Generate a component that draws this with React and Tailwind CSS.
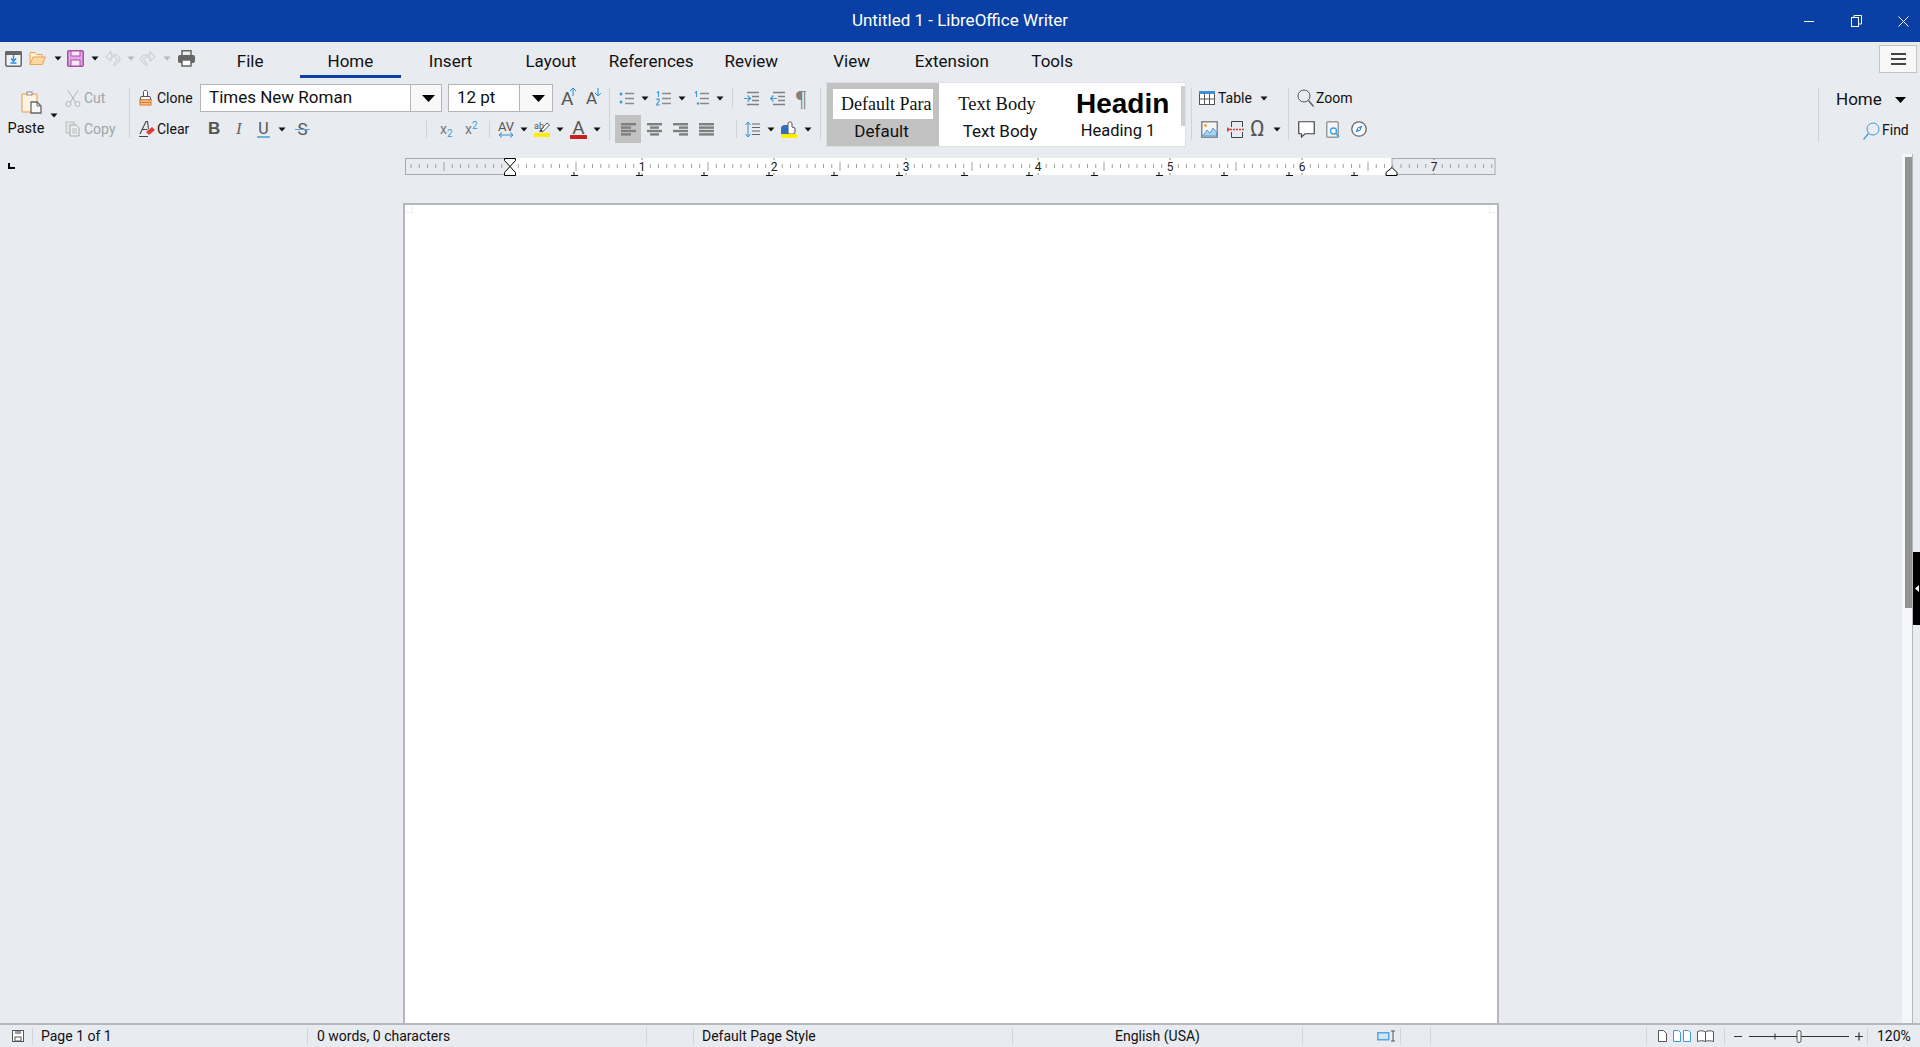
import React from 'react';

const Caret = ({ className = '' }) => (
  <svg width="8" height="5" viewBox="0 0 8 5" className={`shrink-0 ${className}`}>
    <path d="M.5 .5h7L4 4.500z" fill="#111" />
  </svg>
);

const GreyCaret = ({ className = '' }) => (
  <svg width="8" height="5" viewBox="0 0 8 5" className={`shrink-0 ${className}`}>
    <path d="M.5 .5h7L4 4.500z" fill="#b9b9b9" />
  </svg>
);

const Sep = ({ className = '' }) => <div className={`w-px bg-[#cfd2d6] shrink-0 ${className}`} />;

const Row = ({ children }) => <div className="h-[28px] flex items-center">{children}</div>;

// quick access icons
const NewDoc = () => (
  <svg width="17" height="16" viewBox="0 0 17 16" className="ml-[5px]">
    <rect x=".75" y=".75" width="15.500" height="14.500" rx="1.500" fill="#eef3f8" stroke="#666" strokeWidth="1.500" />
    <rect x="0" y="0" width="17" height="4" rx="1.500" fill="#666" />
    <path d="M8.500 4v6M6 7.500l2.500 3 2.500-3M5.500 12h6" fill="none" stroke="#2f8fd8" strokeWidth="1.400" />
  </svg>
);

const OpenIcon = () => (
  <svg width="17" height="15" viewBox="0 0 17 15" className="ml-[7px]">
    <path d="M1 13V1.500h5l2 2h5V6" fill="#fdf0d8" stroke="#e9a452" />
    <path d="M1 13.500l3-7.500h12.500l-3 7.500z" fill="#fbd9a0" stroke="#e9a452" />
  </svg>
);

const SaveIcon = () => (
  <svg width="17" height="17" viewBox="0 0 17 17" className="ml-[5px]">
    <rect x=".75" y=".75" width="15.500" height="15.500" rx="1" fill="#e2a9e2" stroke="#a94fa9" strokeWidth="1.500" />
    <rect x="4" y="1" width="9" height="5" fill="#f7e9f7" stroke="#a94fa9" />
    <rect x="4" y="10" width="9" height="6" fill="#f7e9f7" stroke="#a94fa9" />
  </svg>
);

const UndoIcon = ({ flip, className = '' }) => (
  <svg width="16" height="17" viewBox="0 0 16 17" className={`${flip ? '-scale-x-100' : ''} ${className}`}>
    <path d="M1 7l5-5.500V5h4c4 0 6 3 4.500 6L9.500 16l-1-1 3.500-5c1-1.500-.5-3-2.500-3H6v4z" fill="none" stroke="#c6c8cb" />
  </svg>
);

const PrintIcon = () => (
  <svg width="17" height="17" viewBox="0 0 17 17" className="ml-[7px]">
    <rect x="4" y=".75" width="9" height="5" fill="#eee" stroke="#666" strokeWidth="1.500" />
    <rect x="0" y="5" width="17" height="8" rx="2" fill="#666" />
    <rect x="4" y="10" width="9" height="6" fill="#fff" stroke="#666" strokeWidth="1.500" />
  </svg>
);

const PasteIcon = () => (
  <svg width="21" height="23" viewBox="0 0 21 23">
    <rect x="1" y="3" width="15" height="18" rx="1" fill="#fff3e2" stroke="#f0b27a" strokeWidth="1.500" />
    <rect x="6" y="1" width="5" height="3" fill="#fff" stroke="#8a8a8a" />
    <path d="M10 11h6l4 4v7H10z" fill="#fafafa" stroke="#666" strokeWidth="1.300" />
    <path d="M16 11v4h4" fill="none" stroke="#666" />
  </svg>
);

const CutIcon = () => (
  <svg width="16" height="17" viewBox="0 0 16 17" className="shrink-0">
    <path d="M3 .5l7.500 11.500M13 .5L5.500 12" stroke="#b4b4b4" fill="none" />
    <circle cx="3.500" cy="14" r="2.500" fill="none" stroke="#b4b4b4" />
    <circle cx="12.500" cy="14" r="2.500" fill="none" stroke="#b4b4b4" />
  </svg>
);

const CopyIcon = () => (
  <svg width="16" height="16" viewBox="0 0 16 16" className="shrink-0">
    <rect x="1" y="1" width="8" height="11" fill="#e2e4e7" stroke="#bdbdbd" />
    <path d="M5 4h6l3 3v8H5z" fill="#eceef1" stroke="#a9a9a9" />
    <path d="M7 8h5M7 10h5M7 12h5" stroke="#bdbdbd" />
  </svg>
);

const CloneIcon = () => (
  <svg width="13" height="16" viewBox="0 0 13 16" className="shrink-0">
    <path d="M4.500 6V1.500l1-1h2l1 1V6" fill="#fff" stroke="#555" />
    <path d="M2 6.500h9l1 3.500H1z" fill="#fff" stroke="#555" />
    <rect x="1" y="10" width="11" height="5" fill="#fbc48c" stroke="#e4761f" />
    <path d="M1 12.500h11" stroke="#e4761f" />
  </svg>
);

const ClearIcon = () => (
  <svg width="16" height="16" viewBox="0 0 16 16" className="shrink-0">
    <path d="M1 13L7 .5h1.500L9.500 8M3.500 8.500h5" fill="none" stroke="#444" strokeWidth="1.100" />
    <path d="M7 11l6-5 3 3-6 5z" fill="#e33a3a" />
    <path d="M0 15.500h9" stroke="#444" />
  </svg>
);

const ListIcon = ({ kind, className = '' }) => (
  <svg width="15" height="15" viewBox="0 0 15 15" className={className}>
    <path d="M6 2.500h9M6 7.500h9M6 12.500h9" stroke="#8a8a8a" strokeWidth="1.300" />
    {kind === 'bullet' && (
      <>
        <circle cx="2" cy="3" r="1.500" fill="#3d9bdc" />
        <circle cx="2" cy="11" r="1.500" fill="#3d9bdc" />
      </>
    )}
    {kind === 'num' && <path d="M1 2l1.500-1.500V6M.500 9c.5-1.500 3-1.500 3 0 0 1-2 2.500-3 5h3.500" fill="none" stroke="#3d9bdc" strokeWidth="1.100" />}
    {kind === 'outline' && (
      <>
        <path d="M1 2l1.500-1.500V6" fill="none" stroke="#3d9bdc" strokeWidth="1.100" />
        <circle cx="4" cy="12.500" r="1.200" fill="#3d9bdc" />
      </>
    )}
  </svg>
);

const IndentIcon = ({ out, className = '' }) => (
  <svg width="15" height="15" viewBox="0 0 15 15" className={className}>
    <path d="M3 1.500h12M8 5.500h7M8 9.500h7M3 13.500h12" stroke="#808080" strokeWidth="1.500" />
    {out ? (
      <path d="M7 7.500H1M3.500 4.500l-3 3 3 3" fill="none" stroke="#3d9bdc" strokeWidth="1.100" />
    ) : (
      <path d="M0 7.500h6M3.500 4.500l3 3-3 3" fill="none" stroke="#3d9bdc" strokeWidth="1.100" />
    )}
  </svg>
);

const AlignIcon = ({ lines, className = '' }) => (
  <svg width="15" height="13" viewBox="0 0 15 13" className={className}>
    {lines.map((l, i) => (
      <rect key={i} x={l[0]} y={i * 3.400} width={l[1]} height="2.400" fill="#7f7f7f" />
    ))}
  </svg>
);

const SpacingIcon = ({ className = '' }) => (
  <svg width="15" height="17" viewBox="0 0 15 17" className={className}>
    <path d="M3 1v15M.500 4L3 1l2.500 3M.500 13L3 16l2.500-3" fill="none" stroke="#2f8fd8" />
    <path d="M7 3h8M7 6.500h8M7 10h8M7 13.500h8" stroke="#666" />
  </svg>
);

const ParaBgIcon = ({ className = '' }) => (
  <svg width="16" height="17" viewBox="0 0 16 17" className={className}>
    <path d="M0 13V7c0-2 2-3 4-3h3v9z" fill="#2f6fc0" />
    <path d="M7 12V3c0-3 4-3 4 0v3l3 1v4l-1 2H8z" fill="#fff" stroke="#555" />
    <rect x="0" y="13" width="16" height="4" fill="#ffee00" />
  </svg>
);

const TableIcon = () => (
  <svg width="16" height="14" viewBox="0 0 16 14" className="shrink-0">
    <rect x=".5" y=".5" width="15" height="13" fill="#fff" stroke="#555" />
    <rect x="0" y="0" width="16" height="3" fill="#3d8fd4" />
    <path d="M5.500 3v10M10.500 3v10M0 8h16" stroke="#555" />
  </svg>
);

const ImageIcon = ({ className = '' }) => (
  <svg width="17" height="17" viewBox="0 0 17 17" className={className}>
    <rect x=".75" y=".75" width="15.500" height="15.500" fill="#f3f5f7" stroke="#8a8a8a" strokeWidth="1.500" />
    <circle cx="4.500" cy="4.500" r="1.500" fill="#f0a040" />
    <path d="M1.500 15l4.500-6 3 3 3-5 3.500 4v4z" fill="#a5d0ef" stroke="#3d8fd4" strokeWidth=".8" />
  </svg>
);

const BreakIcon = ({ className = '' }) => (
  <svg width="17" height="17" viewBox="0 0 17 17" className={className}>
    <path d="M4.500 6V.5h11V6M4.500 11v5.500h11V11" fill="none" stroke="#444" />
    <path d="M3 8.500h14" stroke="#e33a3a" strokeDasharray="2 1" strokeWidth="1.500" />
    <path d="M0 6l3.500 2.500L0 11z" fill="#e33a3a" />
  </svg>
);

const CommentIcon = ({ className = '' }) => (
  <svg width="17" height="17" viewBox="0 0 17 17" className={className}>
    <path d="M.75.75h15.500v12H7L3.500 16v-3.250H.75z" fill="#fff" stroke="#444" strokeWidth="1.200" />
  </svg>
);

const FindPageIcon = ({ className = '' }) => (
  <svg width="14" height="17" viewBox="0 0 14 17" className={className}>
    <rect x=".75" y=".75" width="11.500" height="15.500" rx="1" fill="#f3f5f7" stroke="#9a9a9a" strokeWidth="1.500" />
    <circle cx="7.500" cy="10" r="3" fill="#fff" stroke="#3d9bdc" strokeWidth="1.300" />
    <path d="M10 12.500l3 3.500" stroke="#3d9bdc" strokeWidth="1.300" />
  </svg>
);

const NavIcon = ({ className = '' }) => (
  <svg width="16" height="16" viewBox="0 0 16 16" className={className}>
    <circle cx="8" cy="8" r="7.200" fill="#fff" stroke="#666" strokeWidth="1.300" />
    <path d="M11.500 4.500L9.500 9.500 4.500 11.500 6.500 6.500z" fill="#2f8fd8" />
    <circle cx="8" cy="8" r="1" fill="#fff" />
  </svg>
);

const Magnifier = ({ color, className = '' }) => (
  <svg width="17" height="18" viewBox="0 0 17 18" className={`shrink-0 ${className}`}>
    <circle cx="7" cy="7" r="6" fill="none" stroke={color} />
    <path d="M11.500 11.500l5 6" stroke={color} strokeWidth="1.200" />
  </svg>
);

const SizeArrow = ({ down }) => (
  <svg width="8" height="9" viewBox="0 0 8 9" className="absolute -top-[2px] left-[8px]">
    {down ? (
      <path d="M4 0v8M1 5l3 3 3-3" fill="none" stroke="#2f8fd8" />
    ) : (
      <path d="M4 9V1M1 4l3-3 3 3" fill="none" stroke="#2f8fd8" />
    )}
  </svg>
);

const Ruler = () => {
  const ticks = [];
  // a tick every 1/16 inch, inch = 132px, origin at the indent marker
  for (let i = -12; i * 8.25 + 510 < 1495; i++) {
    if (i % 16 === 0) continue;
    const x = 510 + i * 8.25;
    const half = i % 8 === 0;
    ticks.push(
      <line key={i} x1={x - 405} x2={x - 405} y1={half ? 4 : 6} y2={half ? 13 : 10} stroke="#a2a2a2" />
    );
  }
  const tabs = [];
  for (let x = 574; x < 1390; x += 65) tabs.push(x);
  return (
    <svg width="1092" height="19" viewBox="0 0 1092 19" className="block ml-[405px] overflow-visible">
      <rect x=".5" y=".5" width="105" height="16" fill="#e8ebf0" stroke="#a8a8a8" />
      <rect x="105" y="0" width="882" height="17" fill="#fff" />
      <rect x="987" y=".5" width="103" height="16" fill="#e8ebf0" stroke="#a8a8a8" />
      {ticks}
      {[1, 2, 3, 4, 5, 6, 7].map((n) => {
        const x = 105 + 132 * n;
        return (
          <g key={n}>
            <line x1={x} x2={x} y1="0" y2="2" stroke="#8a8a8a" />
            <line x1={x} x2={x} y1="15" y2="17" stroke="#8a8a8a" />
            <text x={x} y="13" textAnchor="middle" fontSize="12" fill="#222" fontFamily="Roboto, sans-serif">
              {n}
            </text>
          </g>
        );
      })}
      {tabs.map((x) => (
        <path key={x} d={`M${x - 405} 14v3M${x - 408} 17.500h7`} stroke="#111" fill="none" />
      ))}
      <path d="M99.500 .5h11v2l-5.500 6-5.500-6zM105 8.500l5.500 6v3h-11v-3z" fill="#fff" stroke="#000" />
      <path d="M987 9.500l5 5v3h-11v-3z" fill="#fff" stroke="#000" />
    </svg>
  );
};

const StatusCell = ({ width, first, children, className = '' }) => (
  <div className={`h-[17px] flex items-center shrink-0 ${first ? '' : 'border-l border-[#d2d5d9]'} ${width} ${className}`}>
    {children}
  </div>
);

export default function App() {
  const tabs = ['File', 'Home', 'Insert', 'Layout', 'References', 'Review', 'View', 'Extension', 'Tools'];

  return (
    <div className="w-[1920px] h-[1047px] flex flex-col overflow-hidden bg-[#e8ebf0] text-[#111] font-['Roboto',sans-serif]">
      {/* title bar */}
      <div className="h-[42px] shrink-0 bg-[#0a3fa5] flex items-center text-white">
        <div className="flex-1" />
        <div className="text-[17px]">Untitled 1 - LibreOffice Writer</div>
        <div className="flex-1 flex items-center justify-end">
          <svg width="10" height="10" viewBox="0 0 10 10" className="mr-[37px]">
            <path d="M0 5.500h10" stroke="#fff" />
          </svg>
          <svg width="11" height="12" viewBox="0 0 11 12" className="mr-[36px]">
            <rect x=".5" y="2.500" width="7" height="9" fill="none" stroke="#fff" />
            <path d="M3 2.500V.5h7.500V9H8" fill="none" stroke="#fff" />
          </svg>
          <svg width="11" height="11" viewBox="0 0 11 11" className="mr-[11px]">
            <path d="M.5.5l10 10M10.500.5l-10 10" stroke="#fff" />
          </svg>
        </div>
      </div>

      {/* menu row */}
      <div className="h-[36px] shrink-0 flex">
        <div className="w-[200px] h-[33px] flex items-center shrink-0">
          <NewDoc />
          <OpenIcon />
          <Caret className="ml-[8px]" />
          <SaveIcon />
          <Caret className="ml-[7px]" />
          <UndoIcon className="ml-[6px]" />
          <GreyCaret className="ml-[6px]" />
          <UndoIcon flip className="ml-[5px]" />
          <GreyCaret className="ml-[7px]" />
          <PrintIcon />
        </div>
        {tabs.map((t) => (
          <div
            key={t}
            className={`w-[100.250px] shrink-0 pt-[6px] flex items-center justify-center text-[17px] border-b-[3px] ${
              t === 'Home' ? 'border-[#0a3fa5]' : 'border-transparent'
            }`}
          >
            {t}
          </div>
        ))}
        <div className="ml-auto mr-[3px] mt-[3px] w-[38px] h-[28px] bg-[#f8f8f8] border border-[#c4c4c4] flex flex-col items-center justify-center gap-[3px]">
          <div className="w-[15px] h-[2px] bg-[#444]" />
          <div className="w-[15px] h-[2px] bg-[#444]" />
          <div className="w-[15px] h-[2px] bg-[#444]" />
        </div>
      </div>

      {/* ribbon */}
      <div className="h-[76px] shrink-0 pt-[6px] flex items-start text-[14px]">
        {/* clipboard */}
        <div className="w-[129px] h-[59px] shrink-0 flex">
          <div className="w-[46px] ml-[8px] flex flex-col items-center pt-[7px] shrink-0">
            <PasteIcon />
            <div className="mt-[6px] text-[14.500px] leading-[18px] -ml-[10px]">Paste</div>
          </div>
          <Caret className="-ml-[4px] mt-[29px]" />
          <div className="ml-[7px] text-[#a3a5a8]">
            <Row>
              <CutIcon />
              <span className="ml-[3px]">Cut</span>
            </Row>
            <div className="h-[3px]" />
            <Row>
              <CopyIcon />
              <span className="ml-[3px]">Copy</span>
            </Row>
          </div>
        </div>
        <Sep className="h-[50px] mt-[4px]" />

        {/* clone / clear */}
        <div className="w-[70px] h-[59px] shrink-0 pl-[9px]">
          <Row>
            <CloneIcon />
            <span className="ml-[5px]">Clone</span>
          </Row>
          <div className="h-[3px]" />
          <Row>
            <ClearIcon />
            <span className="ml-[2px]">Clear</span>
          </Row>
        </div>

        {/* font */}
        <div className="w-[409px] h-[59px] shrink-0">
          <Row>
            <div className="w-[211px] h-[28px] bg-white border border-[#b5b5b5] pl-[8px] flex items-center text-[17px] shrink-0">
              Times New Roman
            </div>
            <div className="w-[32px] h-[28px] -ml-px pl-[4px] bg-[#f8f8f8] border border-[#b5b5b5] flex items-center justify-center shrink-0">
              <svg width="13" height="7" viewBox="0 0 13 7">
                <path d="M0 0h13L6.500 7z" fill="#000" />
              </svg>
            </div>
            <div className="w-[72px] h-[28px] ml-[6px] bg-white border border-[#b5b5b5] pl-[8px] flex items-center text-[17px] shrink-0">
              12 pt
            </div>
            <div className="w-[34px] h-[28px] -ml-px pl-[4px] bg-[#f8f8f8] border border-[#b5b5b5] flex items-center justify-center shrink-0">
              <svg width="13" height="7" viewBox="0 0 13 7">
                <path d="M0 0h13L6.500 7z" fill="#000" />
              </svg>
            </div>
            <div className="ml-[8px] w-[15px] relative text-[19px] text-[#555] leading-none shrink-0">
              A
              <SizeArrow />
            </div>
            <div className="ml-[10px] w-[15px] relative text-[17px] text-[#555] leading-none shrink-0">
              A
              <SizeArrow down />
            </div>
          </Row>
          <div className="h-[3px]" />
          <Row>
            <span className="ml-[8px] w-[11px] font-bold text-[17px] text-[#555] font-['Liberation_Sans',sans-serif]">B</span>
            <span className="ml-[17px] w-[8px] italic text-[17px] text-[#666] font-['Liberation_Serif',serif]">I</span>
            <span className="ml-[13px] w-[13px] text-[16px] leading-[15px] text-[#555] border-b-2 border-[#6db3e0] text-center">U</span>
            <Caret className="ml-[8px]" />
            <span className="ml-[9px] w-[15px] relative text-[17px] text-[#555] text-center leading-none">
              S<span className="absolute left-0 right-0 top-[8px] h-px bg-[#5aa5da]" />
            </span>
            <Sep className="h-[17px] ml-[116px]" />
            <span className="ml-[13px] w-[12px] text-[14px] text-[#777] leading-none">
              x<sub className="text-[#3d9bdc] text-[10px]">2</sub>
            </span>
            <span className="ml-[13px] w-[12px] text-[14px] text-[#777] leading-none">
              x<sup className="text-[#3d9bdc] text-[10px]">2</sup>
            </span>
            <Sep className="h-[17px] ml-[12px]" />
            <div className="ml-[8px] w-[16px] flex flex-col items-center text-[#555] text-[13px] leading-[11px]">
              AV
              <svg width="16" height="6" viewBox="0 0 16 6">
                <path d="M1 3h14M4 .5L1 3l3 2.500M12 .5L15 3l-3 2.500" fill="none" stroke="#2f8fd8" />
              </svg>
            </div>
            <Caret className="ml-[6px]" />
            <div className="ml-[6px] w-[16px] flex flex-col items-stretch">
              <svg width="16" height="12" viewBox="0 0 16 12">
                <path d="M6 10l7-8 2.500 2-7 7z" fill="#fff" stroke="#555" />
                <path d="M5 11l2-3 2 2z" fill="#333" />
                <text x="0" y="8" fontSize="9" fill="#555" fontFamily="Roboto, sans-serif">ab</text>
              </svg>
              <div className="h-[4px] bg-[#ffee00]" />
            </div>
            <Caret className="ml-[6px]" />
            <div className="ml-[6px] w-[17px] flex flex-col items-center text-[#555] text-[19px] leading-[15px]">
              A<div className="w-[17px] h-[4px] bg-[#c9211e]" />
            </div>
            <Caret className="ml-[6px]" />
          </Row>
        </div>
        <Sep className="h-[52px] mt-[4px]" />

        {/* paragraph */}
        <div className="w-[210px] h-[59px] shrink-0">
          <Row>
            <ListIcon kind="bullet" className="ml-[9px]" />
            <Caret className="ml-[7px]" />
            <ListIcon kind="num" className="ml-[7px]" />
            <Caret className="ml-[7px]" />
            <ListIcon kind="outline" className="ml-[8px]" />
            <Caret className="ml-[7px]" />
            <Sep className="h-[20px] ml-[8px]" />
            <IndentIcon className="ml-[11px]" />
            <IndentIcon out className="ml-[11px]" />
            <span className="ml-[11px] w-[15px] text-[23px] leading-none text-[#808080] font-['Liberation_Serif',serif]">¶</span>
          </Row>
          <div className="h-[3px]" />
          <Row>
            <div className="ml-[5px] w-[26px] h-[28px] bg-[#c2c2c2] flex items-center justify-center">
              <AlignIcon lines={[[0, 15], [0, 10], [0, 15], [0, 10]]} />
            </div>
            <AlignIcon lines={[[0, 15], [3, 9], [0, 15], [3, 9]]} className="ml-[6px]" />
            <AlignIcon lines={[[0, 15], [6, 9], [0, 15], [6, 9]]} className="ml-[11px]" />
            <AlignIcon lines={[[0, 15], [0, 15], [0, 15], [0, 15]]} className="ml-[11px]" />
            <Sep className="h-[18px] ml-[22px]" />
            <SpacingIcon className="ml-[8px]" />
            <Caret className="ml-[7px]" />
            <ParaBgIcon className="ml-[6px]" />
            <Caret className="ml-[7px]" />
          </Row>
        </div>
        <Sep className="h-[52px] mt-[4px]" />

        {/* styles gallery */}
        <div className="ml-[5px] w-[360px] h-[65px] -mt-[2px] bg-white border border-[#dcdfe3] flex shrink-0">
          <div className="w-[112px] h-full bg-[#c2c2c2] flex flex-col items-center pt-[6px] shrink-0">
            <div className="w-[100px] h-[30px] bg-white overflow-hidden whitespace-nowrap pl-[8px] text-[18px] leading-[30px] font-['Liberation_Serif',serif]">
              Default Para
            </div>
            <div className="mt-[2px] -ml-[3px] text-[17px] leading-[20px]">Default</div>
          </div>
          <div className="w-[122px] flex flex-col items-center pt-[6px] shrink-0">
            <div className="-ml-[6px] h-[30px] text-[18.500px] leading-[30px] font-['Liberation_Serif',serif]">Text Body</div>
            <div className="mt-[2px] text-[17px] leading-[20px]">Text Body</div>
          </div>
          <div className="w-[114px] flex flex-col items-center pt-[6px] shrink-0">
            <div className="ml-[9px] w-[93px] h-[30px] overflow-hidden whitespace-nowrap text-[28px] font-bold leading-[30px] font-['Liberation_Sans',sans-serif] text-black">
              Headin
            </div>
            <div className="mt-[2px] text-[16.500px] leading-[20px]">Heading 1</div>
          </div>
          <div className="ml-[6px] w-[4px] h-[40px] mt-[3px] bg-[#cfcfcf] shrink-0" />
        </div>
        <Sep className="h-[52px] mt-[4px] ml-[5px]" />

        {/* insert */}
        <div className="w-[96px] h-[59px] shrink-0">
          <Row>
            <div className="ml-[7px]" />
            <TableIcon />
            <span className="ml-[3px] w-[38px]">Table</span>
            <Caret className="ml-[4px]" />
          </Row>
          <div className="h-[3px]" />
          <Row>
            <ImageIcon className="ml-[9px]" />
            <BreakIcon className="ml-[9px]" />
            <span className="ml-[6px] w-[17px] text-[22px] leading-none text-[#555]">Ω</span>
            <Caret className="ml-[6px]" />
          </Row>
        </div>
        <Sep className="h-[52px] mt-[4px]" />

        {/* zoom / review */}
        <div className="w-[120px] h-[59px] shrink-0">
          <Row>
            <Magnifier color="#555" className="ml-[8px]" />
            <span className="ml-[2px]">Zoom</span>
          </Row>
          <div className="h-[3px]" />
          <Row>
            <CommentIcon className="ml-[9px]" />
            <FindPageIcon className="ml-[11px]" />
            <NavIcon className="ml-[11px]" />
          </Row>
        </div>

        <div className="flex-1" />
        <Sep className="h-[54px] mt-[4px]" />
        <div className="w-[101px] h-[59px] shrink-0">
          <div className="h-[31px] pt-px flex items-center">
            <span className="ml-[17px] text-[17px]">Home</span>
            <svg width="11" height="6" viewBox="0 0 11 6" className="ml-[13px]">
              <path d="M0 0h11L5.500 6z" fill="#000" />
            </svg>
          </div>
          <div className="h-[31px] flex items-center">
            <Magnifier color="#3d9bdc" className="ml-[44px] -scale-x-100" />
            <span className="ml-[2px]">Find</span>
          </div>
        </div>
      </div>

      {/* document area */}
      <div className="flex-1 min-h-0 flex">
        <div className="flex-1 min-w-0 flex flex-col">
          <div className="h-[49px] pt-[4px] relative shrink-0">
            <Ruler />
            <svg width="8" height="6" viewBox="0 0 8 6" className="absolute left-[8px] top-[9px]">
              <path d="M1 0v5h6" fill="none" stroke="#000" strokeWidth="2" />
            </svg>
          </div>
          <div className="ml-[403px] w-[1096px] flex-1 bg-white border-2 border-b-0 border-[#b5b7ba] relative">
            <div className="absolute left-0 top-0 w-[8px] h-[8px] border-r border-b border-[#eeeeee]" />
            <div className="absolute right-0 top-0 w-[8px] h-[8px] border-l border-b border-[#eeeeee]" />
          </div>
        </div>
        <div className="w-[10px] shrink-0 bg-[#f4f6f9] pt-[3px] flex justify-end">
          <div className="w-[7px] h-[451px] bg-[#939393]" />
        </div>
        <div className="w-[8px] shrink-0 border-l border-[#b5b7ba] flex flex-col justify-center">
          <div className="w-[7px] h-[73px] bg-black flex items-center justify-center">
            <svg width="4" height="7" viewBox="0 0 4 7">
              <path d="M4 0v7L0 3.500z" fill="#fff" />
            </svg>
          </div>
        </div>
      </div>

      {/* status bar */}
      <div className="h-[24px] shrink-0 border-t-2 border-[#b5b7ba] flex items-center text-[14px]">
        <StatusCell first width="w-[32px]" className="pl-[12px]">
          <svg width="12" height="12" viewBox="0 0 12 12">
            <rect x=".5" y=".5" width="11" height="11" fill="#fff" stroke="#555" />
            <rect x="3" y="1" width="6" height="3" fill="#999" />
            <rect x="3" y="7" width="6" height="4" fill="#fff" stroke="#555" />
          </svg>
        </StatusCell>
        <StatusCell width="w-[275px]" className="pl-[8px]">Page 1 of 1</StatusCell>
        <StatusCell width="w-[339px]" className="pl-[9px]">0 words, 0 characters</StatusCell>
        <StatusCell width="w-[47px]" />
        <StatusCell width="w-[319px]" className="pl-[8px]">Default Page Style</StatusCell>
        <StatusCell width="w-[290px]" className="justify-center">English (USA)</StatusCell>
        <StatusCell width="w-[98px]" className="pl-[74px]">
          <svg width="20" height="12" viewBox="0 0 20 12" className="shrink-0">
            <rect x=".75" y="2.750" width="11" height="7" fill="#cfe5f5" stroke="#5aa5da" strokeWidth="1.500" />
            <path d="M14 1h4M14 11h4M16 1v10" stroke="#555" />
          </svg>
        </StatusCell>
        <StatusCell width="w-[30px]" />
        <StatusCell width="w-[216px]" />
        <StatusCell width="w-[78px]" className="pl-[11px] gap-[6px]">
          <svg width="9" height="12" viewBox="0 0 9 12">
            <path d="M.5.5h5l3 3v8h-8z" fill="#fff" stroke="#555" />
          </svg>
          <svg width="18" height="12" viewBox="0 0 18 12">
            <path d="M.5.5h5l2 2v9h-7zM10.500.5h5l2 2v9h-7z" fill="#fff" stroke="#3d9bdc" />
          </svg>
          <svg width="17" height="12" viewBox="0 0 17 12">
            <path d="M8.500 2C7 .5 3 .5.5 1.500v10C3 10.500 7 10.500 8.500 11.500 10 10.500 14 10.500 16.500 11.500v-10C14 .5 10 .5 8.500 2zM8.500 2v9.500" fill="#fff" stroke="#555" />
          </svg>
        </StatusCell>
        <StatusCell width="w-[143px]" className="pl-[9px]">
          <svg width="129" height="15" viewBox="0 0 129 15">
            <path d="M0 7.500h8M15 7.500h100M121 7.500h8M125 3.500v8" stroke="#333" strokeWidth="1.200" />
            <path d="M41 4.500v6" stroke="#333" />
            <rect x="63" y="1.500" width="4" height="12" rx="2" fill="#f4f4f4" stroke="#555" />
          </svg>
        </StatusCell>
        <StatusCell width="w-[53px]" className="pl-[9px]">120%</StatusCell>
      </div>
    </div>
  );
}
